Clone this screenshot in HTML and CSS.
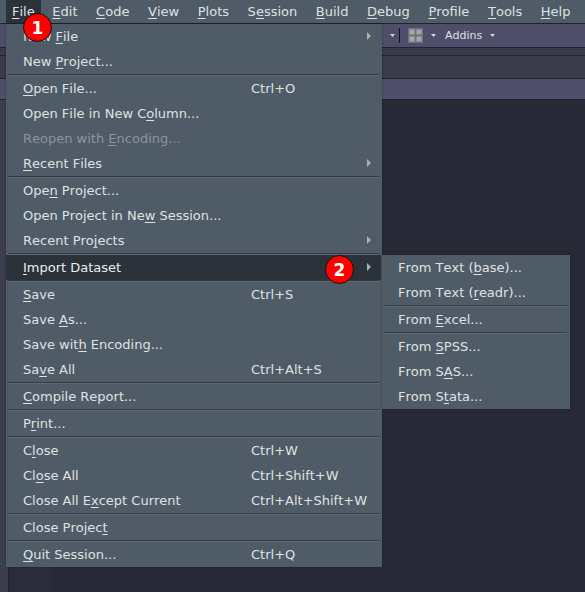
FILE: index.html
```html
<!DOCTYPE html>
<html lang="en">
<head>
<meta charset="utf-8">
<title>RStudio File menu</title>
<link rel="stylesheet" href="styles.css">
</head>
<body>
<div class="app">
  <nav class="menubar">
    <span class="top active"><u>F</u>ile</span>
    <span class="top"><u>E</u>dit</span>
    <span class="top"><u>C</u>ode</span>
    <span class="top"><u>V</u>iew</span>
    <span class="top"><u>P</u>lots</span>
    <span class="top">S<u>e</u>ssion</span>
    <span class="top"><u>B</u>uild</span>
    <span class="top"><u>D</u>ebug</span>
    <span class="top"><u>P</u>rofile</span>
    <span class="top"><u>T</u>ools</span>
    <span class="top"><u>H</u>elp</span>
  </nav>
  <div class="toolbar">
    <svg class="caret" width="7" height="4" viewBox="0 0 7 4"><path d="M0 0h7L3.500 4z"/></svg>
    <span class="vsep"></span>
    <svg class="grid" width="15" height="15" viewBox="0 0 15 15"><rect width="15" height="15" fill="#6f7278"/><rect x="1.500" y="1.500" width="5" height="5" fill="#a4a6ab"/><rect x="8.500" y="1.500" width="5" height="5" fill="#a4a6ab"/><rect x="1.500" y="8.500" width="5" height="5" fill="#a4a6ab"/><rect x="8.500" y="8.500" width="5" height="5" fill="#a4a6ab"/></svg>
    <svg class="caret" width="7" height="4" viewBox="0 0 7 4"><path d="M0 0h7L3.500 4z"/></svg>
    <span class="addins">Addins</span>
    <svg class="caret" width="7" height="4" viewBox="0 0 7 4"><path d="M0 0h7L3.500 4z"/></svg>
  </div>
  <div class="strip"></div>
  <div class="tabs"></div>
  <div class="subbar"></div>
  <div class="workspace">
    <div class="rail"></div>
    <div class="gutter"></div>
    <div class="editor"></div>
  </div>
</div>

<div class="menu file-menu">
  <div class="item"><span class="label">New <u>F</u>ile</span><i class="arrow"></i></div>
  <div class="item"><span class="label">New <u>P</u>roject...</span></div>
  <hr>
  <div class="item"><span class="label"><u>O</u>pen File...</span><span class="key">Ctrl+O</span></div>
  <div class="item"><span class="label">Open File in New C<u>o</u>lumn...</span></div>
  <div class="item disabled"><span class="label">Reopen with <u>E</u>ncoding...</span></div>
  <div class="item"><span class="label"><u>R</u>ecent Files</span><i class="arrow"></i></div>
  <hr>
  <div class="item"><span class="label">Ope<u>n</u> Project...</span></div>
  <div class="item"><span class="label">Open Project in Ne<u>w</u> Session...</span></div>
  <div class="item"><span class="label">Recent Pro<u>j</u>ects</span><i class="arrow"></i></div>
  <hr>
  <div class="item selected"><span class="label"><u>I</u>mport Dataset</span><i class="arrow"></i></div>
  <hr>
  <div class="item"><span class="label"><u>S</u>ave</span><span class="key">Ctrl+S</span></div>
  <div class="item"><span class="label">Save <u>A</u>s...</span></div>
  <div class="item"><span class="label">Save wit<u>h</u> Encoding...</span></div>
  <div class="item"><span class="label">Sa<u>v</u>e All</span><span class="key">Ctrl+Alt+S</span></div>
  <hr>
  <div class="item"><span class="label"><u>C</u>ompile Report...</span></div>
  <hr>
  <div class="item"><span class="label">P<u>r</u>int...</span></div>
  <hr>
  <div class="item"><span class="label">C<u>l</u>ose</span><span class="key">Ctrl+W</span></div>
  <div class="item"><span class="label">Cl<u>o</u>se All</span><span class="key">Ctrl+Shift+W</span></div>
  <div class="item"><span class="label">Close All E<u>x</u>cept Current</span><span class="key">Ctrl+Alt+Shift+W</span></div>
  <hr>
  <div class="item"><span class="label">Close Projec<u>t</u></span></div>
  <hr>
  <div class="item"><span class="label"><u>Q</u>uit Session...</span><span class="key">Ctrl+Q</span></div>
</div>

<div class="menu sub-menu">
  <div class="item"><span class="label">From Text (<u>b</u>ase)...</span></div>
  <div class="item"><span class="label">From Text (<u>r</u>eadr)...</span></div>
  <hr>
  <div class="item"><span class="label">From <u>E</u>xcel...</span></div>
  <hr>
  <div class="item"><span class="label">From <u>S</u>PSS...</span></div>
  <div class="item"><span class="label">From S<u>A</u>S...</span></div>
  <div class="item"><span class="label">From S<u>t</u>ata...</span></div>
</div>

<span class="badge badge-one">1</span>
<span class="badge badge-two">2</span>
</body>
</html>
```
FILE: styles.css
```css
* { box-sizing: border-box; }
html, body { margin: 0; padding: 0; height: 100%; overflow: hidden; }
body {
  background: #272a36;
  font-family: "DejaVu Sans", sans-serif;
  font-size: 13px;
  font-kerning: none;
  color: #dfe2e4;
  position: relative;
}
u { text-underline-offset: 2px; text-decoration-thickness: 1px; }
.app { display: flex; flex-direction: column; height: 592px; }

.menubar {
  height: 24px;
  background: #4f5b66;
  border-bottom: 1px solid #1c2630;
  display: flex;
  padding-left: 6px;
}
.top { padding: 1px 6px 0; line-height: 22px; margin-right: 6.6px; }
.top.active { background: #2b323a; margin-right: 5.6px; }

.toolbar {
  height: 24px;
  background: #4e4e6b;
  border-bottom: 1px solid #1c2630;
  display: flex;
  align-items: center;
  padding-left: 390px;
}
.caret { fill: #d4d6da; flex: none; }
.vsep { width: 1px; height: 15px; background: #10131a; margin: 0 8px 0 4px; }
.grid { margin-right: 8px; flex: none; }
.addins { margin: 0 8px 0 9px; font-size: 11px; color: #dfe2e4; }
.toolbar .caret { width: 5px; height: 3px; }

.strip { height: 8px; background: #3a3a4b; border-bottom: 1px solid #1c2630; }
.tabs { height: 23px; background: #3a3a4b; border-bottom: 1px solid #1c2630; }
.subbar { height: 21px; background: #4e4e6b; border-bottom: 1px solid #1c2630; }
.workspace { flex: 1; display: flex; }
.rail { width: 9px; background: #3d3d50; border-right: 1px solid #1c2630; }
.gutter { width: 43px; background: #2a2c39; }
.editor { flex: 1; background: #272a36; }

.menu {
  position: absolute;
  background: #4f5b66;
  box-shadow: 0 0 2px rgba(0,0,0,.35);
}
.file-menu { left: 6px; top: 24px; width: 376px; }
.sub-menu { left: 382px; top: 255px; width: 188px; }
.item {
  height: 25px;
  display: flex;
  align-items: center;
  padding-left: 17px;
  position: relative;
}
.sub-menu .item { padding-left: 16px; }
.label { display: block; }
.key { position: absolute; left: 245px; }
.item.disabled { color: #8b949b; }
.item.selected { background: #2b323a; color: #eceef0; margin-right: 1px; }
.arrow {
  position: absolute;
  right: 11px;
  top: 8px;
  width: 0;
  height: 0;
  border-left: 4px solid #a9afb5;
  border-top: 4px solid transparent;
  border-bottom: 4px solid transparent;
}
.item.selected .arrow { right: 10px; }
hr {
  margin: 0 3px 0 2px;
  height: 2px;
  border: 0;
  border-top: 1px solid #323b44;
  border-bottom: 1px solid #5e6973;
}
.sub-menu hr { margin-left: 1px; }

.badge {
  position: absolute;
  width: 29px;
  height: 29px;
  border-radius: 50%;
  background: #f00;
  border: 1px solid #111;
  color: #fff;
  font-weight: 700;
  font-size: 17px;
  display: flex;
  align-items: center;
  justify-content: center;
}
.badge-one { left: 23px; top: 13px; }
.badge-two { left: 325px; top: 255px; }
```
